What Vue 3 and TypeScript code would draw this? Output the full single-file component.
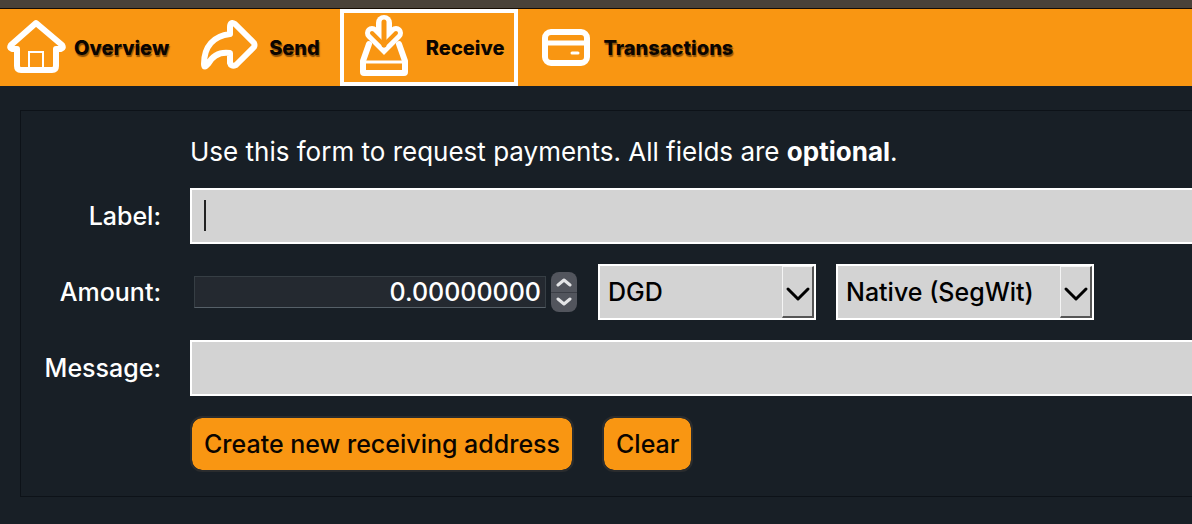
<script setup lang="ts">
import { ref } from 'vue'

type Tab = 'Overview' | 'Send' | 'Receive' | 'Transactions'

const tabs: Tab[] = ['Overview', 'Send', 'Receive', 'Transactions']
const active = ref<Tab>('Receive')

const label = ref('')
const amount = ref('0.00000000')
const unit = ref('DGD')
const addressType = ref('Native (SegWit)')
const message = ref('')

function step(delta: number) {
  amount.value = Math.max(0, Number(amount.value) + delta).toFixed(8)
}

function clearForm() {
  label.value = ''
  amount.value = '0.00000000'
  message.value = ''
}
</script>

<template>
  <div class="window">
    <div class="titlebar"></div>
    <nav class="toolbar">
      <button
        v-for="tab in tabs"
        :key="tab"
        type="button"
        class="tab"
        :class="[tab.toLowerCase(), { active: tab === active }]"
        @click="active = tab"
      >
        <svg v-if="tab === 'Overview'" class="icon" width="60" height="58" viewBox="0 1 60 58" aria-hidden="true">
          <path d="M30 5 L5 27 Q3 30 6 31 H11 V48 Q11 52 15 52 H46 Q50 52 50 48 V31 H55 Q58 30 56 27 Z" fill="none" stroke="#fff" stroke-width="6" stroke-linejoin="round" />
          <path d="M23 51 V34 H37 V51" fill="none" stroke="#fff" stroke-width="2" />
        </svg>
        <svg v-else-if="tab === 'Send'" class="icon" width="60" height="56" viewBox="1 2 60 56" aria-hidden="true">
          <path d="M30 9 Q30 3 35 6 L54 25 Q55 27 54 29 L36 47 Q31 49 30 45 V35 Q15 33 8 46 Q4 51 4 46 C4 28 14 18 30 16 Z" fill="none" stroke="#fff" stroke-width="6" stroke-linejoin="round" />
        </svg>
        <svg v-else-if="tab === 'Receive'" class="icon" width="50" height="68" viewBox="1 3 50 68" aria-hidden="true">
          <path d="M10 33 L4 50 V61 Q4 62 5 62 H45 Q46 62 46 61 V50 L40 33" fill="none" stroke="#fff" stroke-width="6" stroke-linecap="round" stroke-linejoin="round" />
          <path d="M4 51 H46" stroke="#fff" stroke-width="3" />
          <g fill="none" stroke="#fff" stroke-linecap="round" stroke-linejoin="miter">
            <path d="M25 12 V30" stroke-width="16" />
            <path d="M13 22 L25 34 L37 22" stroke-width="14" />
          </g>
          <g fill="none" stroke="#f99612" stroke-linecap="round" stroke-linejoin="miter">
            <path d="M25 11 V34" stroke-width="5" />
            <path d="M13 22 L25 34 L37 22" stroke-width="4" />
          </g>
        </svg>
        <svg v-else class="icon" width="50" height="40" viewBox="0 0 50 40" aria-hidden="true">
          <rect x="4" y="4" width="42" height="31" rx="6" fill="none" stroke="#fff" stroke-width="6" />
          <path d="M4 15 H46" stroke="#fff" stroke-width="5" />
          <path d="M31 25 H37" stroke="#fff" stroke-width="3" stroke-linecap="round" />
        </svg>
        <span>{{ tab }}</span>
      </button>
    </nav>

    <form class="panel" @submit.prevent>
      <p class="intro">Use this form to request payments. All fields are <strong>optional</strong>.</p>

      <label class="caption" for="label">Label:</label>
      <div class="field">
        <input id="label" v-model="label" class="text" type="text" />
        <span v-if="!label" class="caret"></span>
      </div>

      <label class="caption" for="amount">Amount:</label>
      <div class="row">
        <div class="spin">
          <input id="amount" v-model="amount" class="number" type="text" inputmode="decimal" />
          <div class="stepper">
            <button type="button" aria-label="Increase" @click="step(0.001)">
              <svg width="16" height="10" viewBox="0 0 16 10"><path d="M2 8 L8 3 L14 8" /></svg>
            </button>
            <button type="button" aria-label="Decrease" @click="step(-0.001)">
              <svg width="16" height="10" viewBox="0 0 16 10"><path d="M2 2 L8 7 L14 2" /></svg>
            </button>
          </div>
        </div>
        <div class="combo unit">
          <select v-model="unit" aria-label="Unit">
            <option>DGD</option>
          </select>
          <span class="drop"><svg width="26" height="16" viewBox="0 0 26 16"><path d="M3 3 L13 13 L23 3" /></svg></span>
        </div>
        <div class="combo kind">
          <select v-model="addressType" aria-label="Address type">
            <option>Native (SegWit)</option>
          </select>
          <span class="drop"><svg width="26" height="16" viewBox="0 0 26 16"><path d="M3 3 L13 13 L23 3" /></svg></span>
        </div>
      </div>

      <label class="caption" for="message">Message:</label>
      <div class="field">
        <input id="message" v-model="message" class="text" type="text" />
      </div>

      <div class="actions">
        <button type="submit" class="action">Create new receiving address</button>
        <button type="button" class="action" @click="clearForm">Clear</button>
      </div>
    </form>
  </div>
</template>

<style>
body {
  margin: 0;
  background: #181f26;
}
</style>

<style scoped>
* {
  box-sizing: border-box;
}

.window {
  min-height: 100vh;
  overflow: hidden;
  background: #181f26;
  color: #fff;
  font-family: Inter, "Liberation Sans", sans-serif;
  font-size: 25px;
  font-weight: 500;
  line-height: 32px;
}

button,
input,
select {
  margin: 0;
  font: inherit;
}

.titlebar {
  height: 9px;
  background: #494239;
  border-bottom: 1px solid #150c02;
}

.toolbar {
  display: flex;
  height: 77px;
  background: #f99612;
}

.tab {
  display: flex;
  align-items: center;
  gap: 8px;
  padding: 0 8px;
  border: 4px solid transparent;
  background: none;
  color: #0b0500;
  font-size: 20px;
  font-weight: 800;
  text-shadow: 1px 2px 1px rgba(70, 35, 0, 0.6);
  white-space: nowrap;
}

.icon {
  flex: none;
}

.overview {
  padding-left: 2px;
}

.send {
  padding-left: 16px;
  padding-right: 16px;
}

.receive {
  gap: 16px;
  padding-left: 16px;
  padding-right: 10px;
}

.transactions {
  gap: 12px;
  padding-left: 19px;
}

.active {
  border-color: #fff;
  text-shadow: none;
}

.panel {
  display: grid;
  grid-template-columns: 140px 1fr;
  gap: 20px 29px;
  margin: 24px 0 0 20px;
  padding: 25px 0 24px;
  border: 1px solid #0d1218;
  border-right: 0;
}

.intro {
  grid-column: 2;
  margin: 0;
  font-size: 26px;
  font-weight: 400;
}

.intro strong {
  font-weight: 700;
}

.caption {
  align-self: center;
  text-align: right;
}

.field {
  position: relative;
}

.text {
  display: block;
  width: 100%;
  height: 56px;
  padding: 0 12px;
  border: 2px solid #fff;
  border-right: 0;
  border-radius: 0;
  outline: none;
  background: #d3d3d3;
  color: #000;
}

.caret {
  position: absolute;
  top: 12px;
  left: 14px;
  width: 2px;
  height: 31px;
  background: #222;
  pointer-events: none;
}

.row {
  display: flex;
  align-items: center;
  gap: 20px;
}

.spin {
  display: flex;
  align-items: center;
  gap: 5px;
  padding: 0 1px 0 4px;
}

.number {
  width: 352px;
  height: 32px;
  padding: 0 4px;
  border: 1px solid #363e44;
  border-bottom-color: #566068;
  outline: none;
  background: #242930;
  color: #fff;
  text-align: right;
}

.stepper {
  display: flex;
  flex-direction: column;
  width: 26px;
  height: 40px;
  border-radius: 8px;
  overflow: hidden;
  background: #52555d;
}

.stepper button {
  display: flex;
  flex: 1;
  align-items: center;
  justify-content: center;
  padding: 0;
  border: 0;
  background: none;
}

.stepper button + button {
  border-top: 1px solid #3b3e46;
}

.stepper path {
  fill: none;
  stroke: #e4e5e7;
  stroke-width: 3;
  stroke-linecap: round;
  stroke-linejoin: round;
}

.combo {
  position: relative;
  height: 56px;
}

.unit {
  width: 218px;
}

.kind {
  width: 258px;
}

.combo select {
  width: 100%;
  height: 100%;
  padding: 0 40px 0 8px;
  border: 2px solid #fff;
  border-radius: 0;
  outline: none;
  appearance: none;
  background: #d3d3d3;
  color: #000;
}

.drop {
  position: absolute;
  top: 2px;
  right: 2px;
  bottom: 2px;
  display: flex;
  align-items: center;
  justify-content: center;
  width: 32px;
  padding-top: 4px;
  border: 1px solid #f4f4f4;
  border-right: 2px solid #555;
  border-bottom: 2px solid #555;
  pointer-events: none;
}

.drop path {
  fill: none;
  stroke: #000;
  stroke-width: 3;
  stroke-linecap: round;
  stroke-linejoin: round;
}

.actions {
  display: flex;
  grid-column: 2;
  gap: 28px;
}

.action {
  height: 56px;
  padding: 0 12px;
  border: 2px solid #2a2c2e;
  border-radius: 12px;
  background: #f99612;
  background-clip: padding-box;
  color: #0b0500;
  white-space: nowrap;
}
</style>
